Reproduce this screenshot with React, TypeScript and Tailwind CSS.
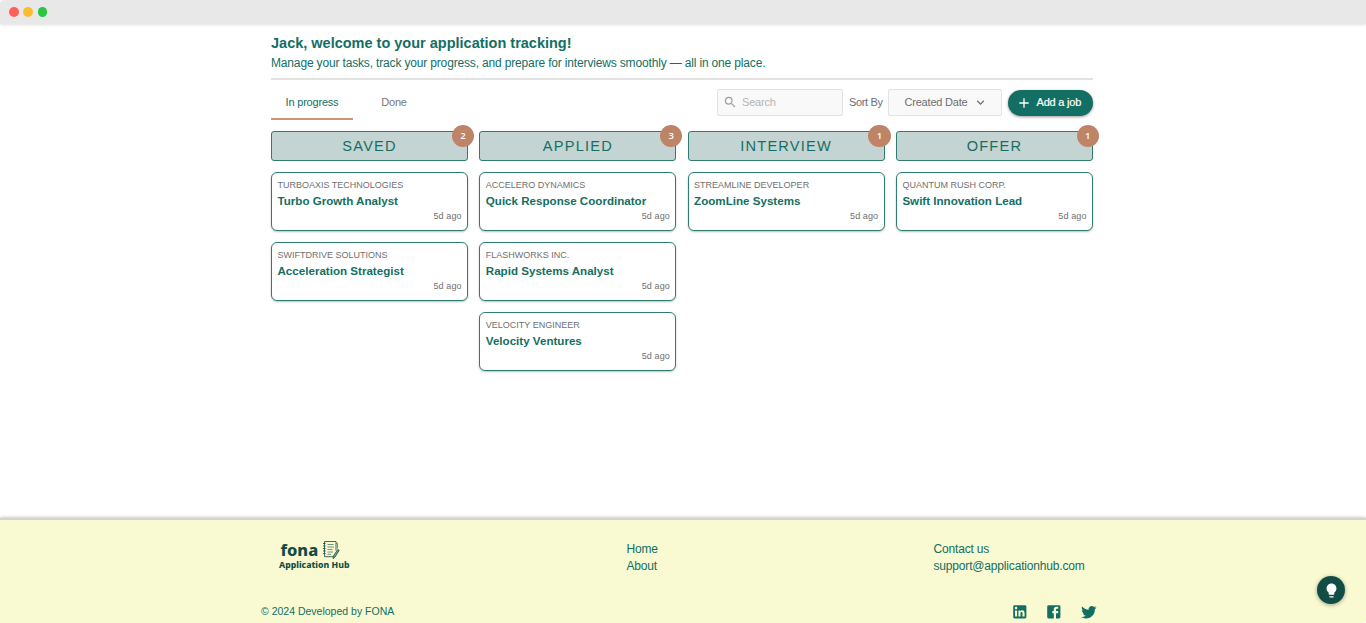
import type { ReactNode } from "react";
import { MdAdd, MdKeyboardArrowDown, MdSearch } from "react-icons/md";

type Job = { company: string; title: string };
type Column = { name: string; jobs: Job[] };

const columns: Column[] = [
  {
    name: "SAVED",
    jobs: [
      { company: "TURBOAXIS TECHNOLOGIES", title: "Turbo Growth Analyst" },
      { company: "SWIFTDRIVE SOLUTIONS", title: "Acceleration Strategist" },
    ],
  },
  {
    name: "APPLIED",
    jobs: [
      { company: "ACCELERO DYNAMICS", title: "Quick Response Coordinator" },
      { company: "FLASHWORKS INC.", title: "Rapid Systems Analyst" },
      { company: "VELOCITY ENGINEER", title: "Velocity Ventures" },
    ],
  },
  { name: "INTERVIEW", jobs: [{ company: "STREAMLINE DEVELOPER", title: "ZoomLine Systems" }] },
  { name: "OFFER", jobs: [{ company: "QUANTUM RUSH CORP.", title: "Swift Innovation Lead" }] },
];

function Icon({ className, children }: { className: string; children: ReactNode }) {
  return (
    <svg viewBox="0 0 24 24" fill="currentColor" className={className} aria-hidden="true">
      {children}
    </svg>
  );
}

function JobCard({ job }: { job: Job }) {
  return (
    <article className="flex h-[59px] flex-col rounded-[6px] border border-[#2f7d71] bg-white pt-[6px] pr-[5.5px] pl-[5.5px] shadow-[0_1px_2px_rgba(0,0,0,0.25)]">
      <div className="h-3 text-[9px] leading-3 text-[#6f6f6f]">{job.company}</div>
      <h3 className="mt-[2px] h-4 text-[11.6px] leading-4 font-bold text-[#136f63]">{job.title}</h3>
      <div className="text-right text-[9px] leading-[14px] tracking-[0.1px] text-[#707070]">5d ago</div>
    </article>
  );
}

function BoardColumn({ column }: { column: Column }) {
  return (
    <section className="flex flex-col gap-[11px]">
      <div className="relative flex h-[30px] items-center justify-center rounded-[3px] border border-[#2f7d71] bg-[#c4d4d2]">
        <h2 className="text-[14.6px] leading-5 tracking-[1.2px] text-[#136f63]">{column.name}</h2>
        <span className="absolute -top-[7.5px] -right-[7px] flex size-[22.5px] items-center justify-center rounded-full bg-[#be8467] font-['Open_Sans',sans-serif] text-[9.5px] leading-3 font-semibold text-white">
          {column.jobs.length}
        </span>
      </div>
      {column.jobs.map((job) => (
        <JobCard key={job.title} job={job} />
      ))}
    </section>
  );
}

function Logo() {
  return (
    <div className="flex flex-col font-['Noto_Sans','Open_Sans',sans-serif] text-[#124d45]">
      <div className="flex h-5 items-center gap-[3px] pl-[1.5px]">
        <span className="w-[38.5px] text-[16.4px] leading-5 font-extrabold">fona</span>
        <svg viewBox="0 0 18 20" className="h-5 w-[18px]" fill="none" stroke="currentColor" aria-hidden="true">
          <path d="M2.5 1.5H14v9M2.5 1.5v15.2h9" strokeWidth="0.8" />
          <path d="M1 3.5h2.6M1 6h2.6M1 8.5h2.6M1 11h2.6M1 13.5h2.6" strokeWidth="0.8" />
          <path d="M5.5 4.5h6M5.5 7h6.5M5.5 9.5h5M5.5 12h5.5M5.5 14.3h3.5" strokeWidth="0.6" />
          <path d="M15.8 9.5l1.4.8-4 6.5-2.2 1.9.4-2.8z" strokeWidth="0.8" fill="#7f9f88" />
          <path d="M14 3l1.5.4v5" strokeWidth="0.6" />
        </svg>
      </div>
      <span className="text-[8.7px] leading-[11px] font-extrabold">Application Hub</span>
    </div>
  );
}

export default function App() {
  return (
    <div className="flex h-[623px] w-full flex-col overflow-hidden bg-white font-['Liberation_Sans',Arial,sans-serif] text-[#136f63]">
      <header className="flex h-6 shrink-0 items-center gap-[4.7px] rounded-tl-[5px] bg-[#e8e8e8] pl-[9.2px] shadow-[0_1px_3px_rgba(0,0,0,0.12)]">
        <span className="size-[9.5px] rounded-full bg-[#ff5f57]" />
        <span className="size-[9.5px] rounded-full bg-[#febc2e]" />
        <span className="size-[9.5px] rounded-full bg-[#28c840]" />
      </header>

      <main className="ml-[271px] flex w-[822px] flex-1 flex-col">
        <h1 className="mt-[11px] text-[14.5px] leading-[17px] font-bold">
          Jack, welcome to your application tracking!
        </h1>
        <p className="mt-[3px] text-[12px] leading-[17px] tracking-[-0.16px]">
          Manage your tasks, track your progress, and prepare for interviews smoothly — all in one place.
        </p>
        <hr className="mt-[6px] border-t-2 border-[#e2e2e2]" />

        <div className="flex h-10 items-start">
          <nav className="flex text-[11px] tracking-[-0.2px]">
            <button className="flex h-10 w-[82px] items-center justify-center border-b-2 border-[#cb947b] pt-[7px] text-[#136f63]">
              In progress
            </button>
            <button className="flex h-10 w-[82px] items-center justify-center border-b-2 border-transparent pt-[7px] text-[#777]">
              Done
            </button>
          </nav>
          <div className="mt-[9px] ml-auto flex h-[27px] items-center text-[11px] tracking-[-0.2px] text-[#6e6e6e]">
            <div className="flex h-[27px] w-[126px] items-center gap-[4.5px] rounded-[2px] border border-[#e2e2e2] bg-[#f9f9f9] pl-[5px] text-[#b4b4b4]">
              <MdSearch className="size-[14.5px] text-[#a0a0a0]" />
              <span>Search</span>
            </div>
            <span className="ml-[6px] w-[33px] tracking-[-0.35px] whitespace-nowrap">Sort By</span>
            <button className="ml-[6px] flex h-[27px] w-[114px] items-center justify-center gap-[5px] rounded-[2px] border border-[#e2e2e2] bg-[#f9f9f9]">
              <span className="pl-[2px]">Created Date</span>
              <MdKeyboardArrowDown className="size-[15px]" />
            </button>
            <button className="ml-[6px] flex h-[26px] w-[85px] items-center gap-[5px] rounded-full bg-[#136f63] pl-[7.5px] text-white shadow-[0_1px_3px_rgba(0,0,0,0.4)]">
              <MdAdd className="size-4" />
              <span className="[-webkit-text-stroke:0.2px_white]">Add a job</span>
            </button>
          </div>
        </div>

        <div className="mt-[11px] grid w-[822px] grid-cols-4 gap-x-[11.2px]">
          {columns.map((column) => (
            <BoardColumn key={column.name} column={column} />
          ))}
        </div>
      </main>

      <footer className="flex h-[105px] shrink-0 flex-col rounded-br-[5px] border-t-2 border-[#d4d4cc] bg-[#f9f9d2] shadow-[0_-1px_3px_rgba(0,0,0,0.2)]">
        <div className="flex h-[76px] items-start pl-[279px] text-[12px] leading-[17px] tracking-[-0.17px]">
          <div className="mt-5 w-[347.5px] tracking-normal">
            <Logo />
          </div>
          <nav className="mt-[21px] flex w-[307px] flex-col">
            <a>Home</a>
            <a>About</a>
          </nav>
          <div className="mt-[21px] flex flex-col">
            <span>Contact us</span>
            <a>support@applicationhub.com</a>
          </div>
        </div>
        <div className="mt-[2px] flex h-[27px] items-center pt-[4px] pl-[261px]">
          <span className="w-[750px] text-[10.5px]">© 2024 Developed by FONA</span>
          <div className="flex items-center gap-[16.7px]">
            <Icon className="size-[17.6px]">
              <path d="M19 3a2 2 0 0 1 2 2v14a2 2 0 0 1-2 2H5a2 2 0 0 1-2-2V5a2 2 0 0 1 2-2h14m-.5 15.5v-5.3a3.26 3.26 0 0 0-3.26-3.26c-.85 0-1.84.52-2.32 1.3v-1.11h-2.79v8.37h2.79v-4.93c0-.77.62-1.4 1.39-1.4a1.4 1.4 0 0 1 1.4 1.4v4.93h2.79M6.88 8.56a1.68 1.68 0 0 0 1.68-1.68c0-.93-.75-1.69-1.68-1.69a1.69 1.69 0 0 0-1.69 1.69c0 .93.76 1.68 1.69 1.68m1.39 9.94v-8.37H5.5v8.37h2.77z" />
            </Icon>
            <Icon className="size-[17.6px]">
              <path d="M5 3h14a2 2 0 0 1 2 2v14a2 2 0 0 1-2 2H5a2 2 0 0 1-2-2V5a2 2 0 0 1 2-2m13 2h-2.5A3.5 3.5 0 0 0 12 8.5V11h-2v3h2v7h3v-7h3v-3h-3V9a1 1 0 0 1 1-1h2V5z" />
            </Icon>
            <Icon className="size-[17.6px]">
              <path d="M22.46 6c-.77.35-1.6.58-2.46.69.88-.53 1.56-1.37 1.88-2.38-.83.5-1.75.85-2.72 1.05C18.37 4.5 17.26 4 16 4c-2.35 0-4.27 1.92-4.27 4.29 0 .34.04.67.11.98C8.28 9.09 5.11 7.38 3 4.79c-.37.63-.58 1.37-.58 2.15 0 1.49.75 2.81 1.91 3.56-.71 0-1.37-.2-1.95-.5v.03c0 2.08 1.48 3.82 3.44 4.21a4.22 4.22 0 0 1-1.93.07 4.28 4.28 0 0 0 4 2.98 8.521 8.521 0 0 1-5.33 1.84c-.34 0-.68-.02-1.02-.06C3.44 20.29 5.7 21 8.12 21 16 21 20.33 14.46 20.33 8.79c0-.19 0-.37-.01-.56.84-.6 1.56-1.36 2.14-2.23z" />
            </Icon>
          </div>
        </div>
      </footer>

      <button aria-label="Tips" className="absolute top-[576px] left-[1317px] flex size-7 items-center justify-center rounded-full bg-[#124d45] text-white shadow-[0_1px_4px_rgba(0,0,0,0.35)]">
        <Icon className="size-[17px]">
          <path d="M9 21c0 .5.4 1 1 1h4c.6 0 1-.5 1-1v-1H9v1zm3-19C8.1 2 5 5.1 5 9c0 2.4 1.2 4.5 3 5.7V17c0 .5.4 1 1 1h6c.6 0 1-.5 1-1v-2.3c1.8-1.3 3-3.4 3-5.7 0-3.9-3.1-7-7-7z" />
        </Icon>
      </button>
    </div>
  );
}
